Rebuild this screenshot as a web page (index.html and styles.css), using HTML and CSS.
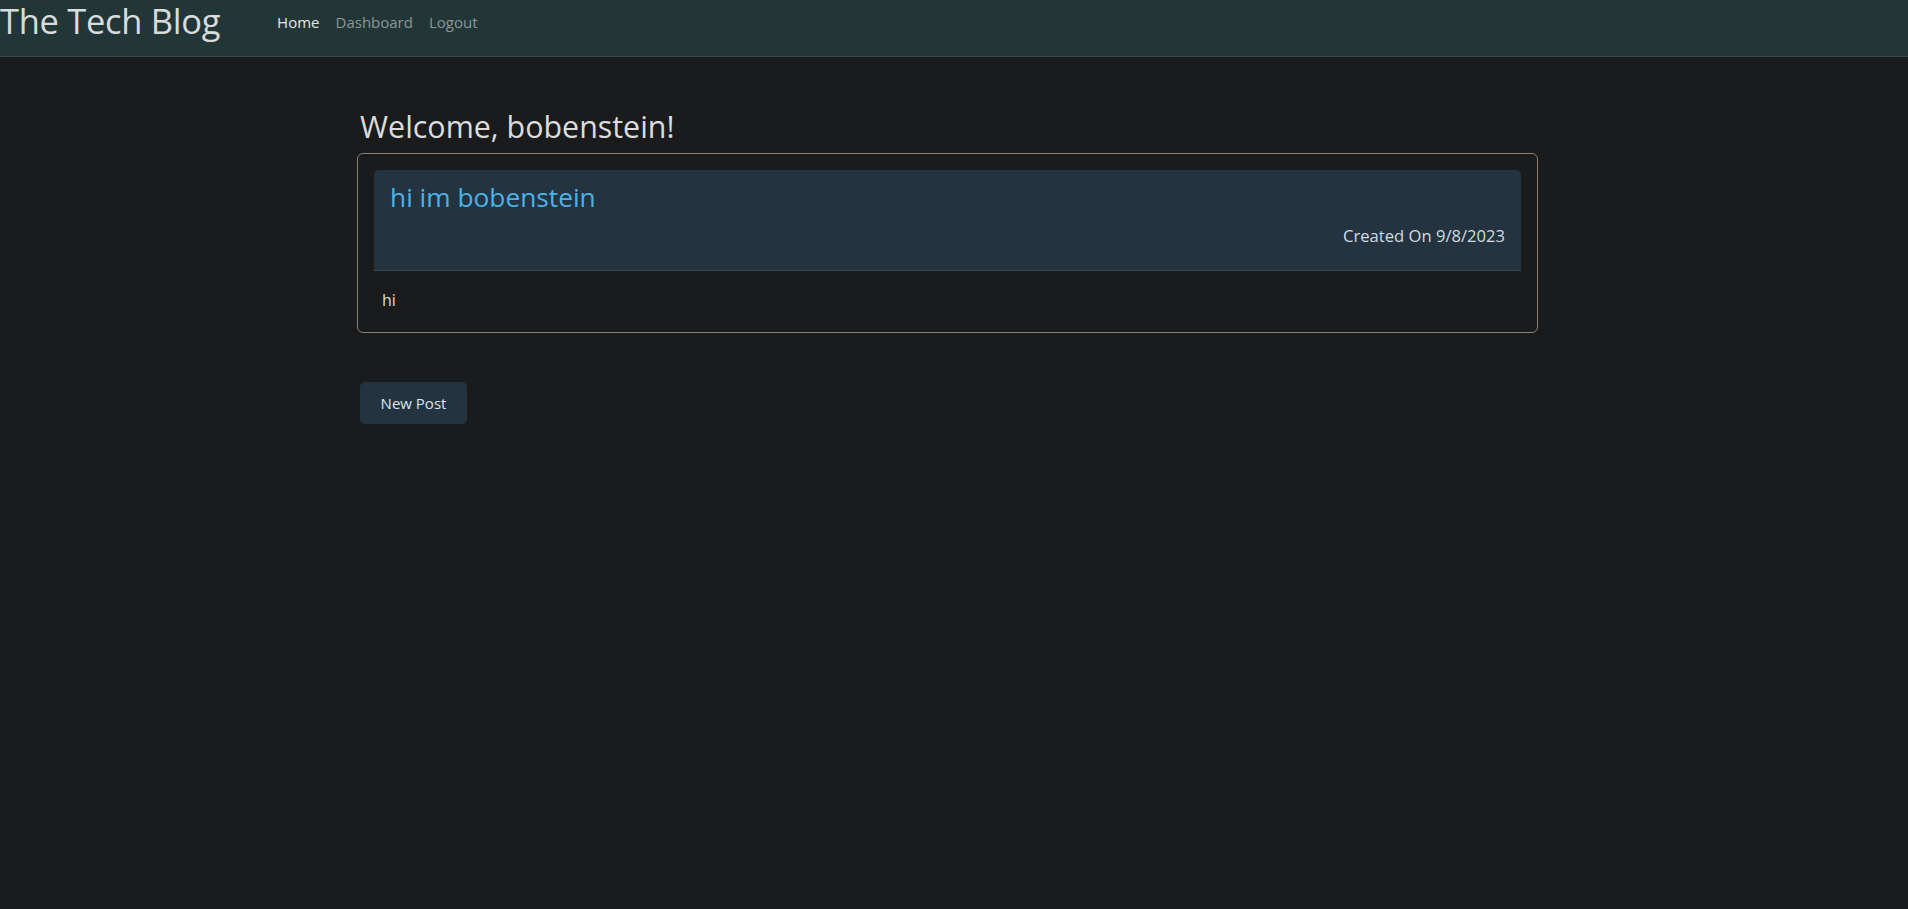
FILE: index.html
```html
<!DOCTYPE html>
<html lang="en">
<head>
<meta charset="utf-8">
<title>The Tech Blog</title>
<link rel="stylesheet" href="styles.css">
</head>
<body>
<nav class="navbar">
  <a class="brand" href="#">The Tech Blog</a>
  <ul class="nav-links">
    <li><a class="nav-link active" href="#">Home</a></li>
    <li><a class="nav-link" href="#">Dashboard</a></li>
    <li><a class="nav-link" href="#">Logout</a></li>
  </ul>
</nav>
<main class="main">
  <h2 class="welcome">Welcome, bobenstein!</h2>
  <section class="post-card">
    <div class="post-header">
      <h3 class="post-title">hi im bobenstein</h3>
      <p class="post-date">Created On 9/8/2023</p>
    </div>
    <div class="post-body">hi</div>
  </section>
  <button class="btn-new" type="button">New Post</button>
</main>
</body>
</html>
```
FILE: styles.css
```css
* { box-sizing: border-box; }
html, body { margin: 0; padding: 0; }
body {
  background: #1a1b1d;
  color: #dcdcdc;
  font-family: "Open Sans", "Noto Sans", sans-serif;
  min-height: 909px;
}
a { text-decoration: none; }

.navbar {
  display: flex;
  align-items: center;
  height: 57px;
  background: #223638;
  border-bottom: 1px solid #3a4848;
}
.brand {
  font-size: 34.5px;
  line-height: 1;
  color: #d8dcdc;
  margin-top: -13px;
  margin-right: 49px;
  letter-spacing: -0.3px;
}
.nav-links {
  display: flex;
  list-style: none;
  margin: -12px 0 0;
  padding: 0;
}
.nav-link {
  display: block;
  padding: 0 8px;
  font-size: 15px;
  color: #8a9796;
}
.nav-link.active { color: #e2e6e6; }

.main {
  width: 1181px;
  margin-left: 357px;
  padding-top: 52px;
}
.welcome {
  margin: 0 0 8px 3px;
  font-size: 30.4px;
  font-weight: 400;
  line-height: 1.2;
  color: #dcdcdc;
}
.post-card {
  border: 1px solid #8a8170;
  border-radius: 6px;
  padding: 16px 16px 20px;
}
.post-header {
  background: #243340;
  border-top-left-radius: 5px;
  border-top-right-radius: 5px;
  border-bottom: 1px solid #3a4650;
  padding: 12px 16px 21px 16px;
}
.post-title {
  margin: 0;
  font-size: 26.3px;
  font-weight: 400;
  line-height: 1.2;
  color: #4db2e6;
}
.post-date {
  margin: 10px 0 0;
  text-align: right;
  font-size: 16.6px;
  line-height: 1.5;
  color: #d4dbe0;
}
.post-body {
  padding: 17px 0 0 8px;
  font-size: 16px;
  line-height: 1.5;
  color: #dcdcdc;
}
.btn-new {
  margin: 49px 0 0 3px;
  width: 107px;
  height: 42px;
  background: #243340;
  color: #dde4ea;
  border: 0;
  border-radius: 5px;
  font-family: "Open Sans", "Noto Sans", sans-serif;
  font-size: 15px;
}
```
